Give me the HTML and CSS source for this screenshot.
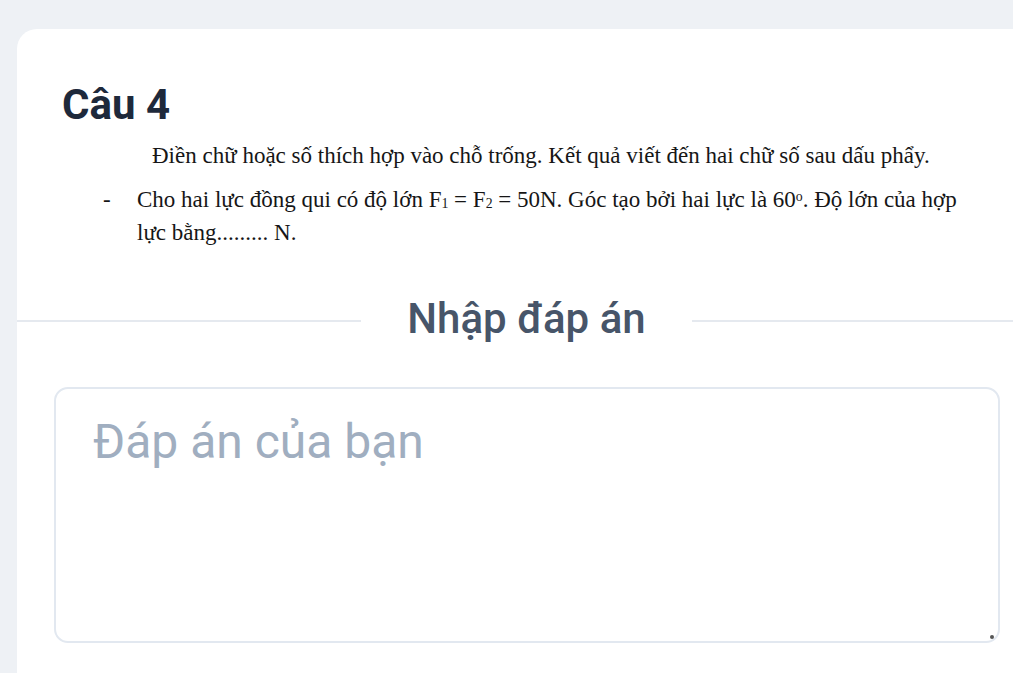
FILE: index.html
```html
<!DOCTYPE html>
<html lang="vi">
<head>
<meta charset="utf-8">
<title>Câu 4</title>
<link rel="stylesheet" href="styles.css">
</head>
<body>
<main class="card">
  <h1 class="title">Câu 4</h1>
  <div class="question">
    <p class="lead">Điền chữ hoặc số thích hợp vào chỗ trống. Kết quả viết đến hai chữ số sau dấu phẩy.</p>
    <div class="item">
      <span class="dash">-</span>
      <p class="item-text">Cho hai lực đồng qui có độ lớn F<sub>1</sub> = F<sub>2</sub> = 50N. Góc tạo bởi hai lực là 60<sup>o</sup>. Độ lớn của hợp lực bằng......... N.</p>
    </div>
  </div>
  <div class="divider">
    <span class="line"></span>
    <h2 class="divider-text">Nhập đáp án</h2>
    <span class="line"></span>
  </div>
  <div class="answer-wrap">
    <textarea class="answer" placeholder="Đáp án của bạn"></textarea>
    <span class="grip"></span>
  </div>
</main>
</body>
</html>
```

FILE: styles.css
```css
html, body {
  margin: 0;
  padding: 0;
}
body {
  background: #eef1f5;
  overflow: hidden;
  font-family: Roboto, "Noto Sans", sans-serif;
}
.card {
  box-sizing: border-box;
  width: 1019px;
  min-height: 660px;
  margin: 29px 0 0 17px;
  background: #ffffff;
  border-radius: 20px 20px 0 0;
  padding: 51px 0 0;
}
.title {
  margin: 0 0 0 45px;
  font-size: 42px;
  line-height: 50px;
  font-weight: 700;
  color: #1e293b;
}
.question {
  font-family: "Liberation Serif", "DejaVu Serif", serif;
  font-size: 23px;
  color: #161616;
  margin-top: 9px;
}
.lead {
  margin: 0 0 0 135px;
  line-height: 33px;
}
.item {
  display: flex;
  margin: 11px 0 0 86px;
}
.dash {
  width: 34px;
  flex: none;
  line-height: 33px;
}
.item-text {
  margin: 0;
  width: 830px;
  line-height: 33px;
}
.item-text sub, .item-text sup {
  font-size: 60%;
  line-height: 0;
}
.item-text sub {
  vertical-align: -1px;
}
.item-text sup {
  vertical-align: 6px;
}
.divider {
  display: flex;
  align-items: center;
  gap: 46px;
  margin-top: 45px;
}
.line {
  flex: 1;
  height: 2px;
  margin-top: 4px;
  background: #e5e9ef;
}
.divider-text {
  margin: 0;
  font-size: 42px;
  line-height: 50px;
  font-weight: 500;
  color: #475569;
}
.answer-wrap {
  position: relative;
  padding: 0 36px 0 37px;
  margin-top: 43px;
}
.answer {
  display: block;
  box-sizing: border-box;
  width: 100%;
  height: 256px;
  border: 2px solid #e2e8f0;
  border-radius: 14px;
  padding: 24px 37px;
  font-family: Roboto, "Noto Sans", sans-serif;
  font-size: 48px;
  color: #1e293b;
  resize: none;
  outline: none;
}
.answer::placeholder {
  color: #a0aec0;
}
.grip {
  position: absolute;
  right: 42px;
  bottom: 4px;
  width: 4px;
  height: 4px;
  border-radius: 50%;
  background: #555;
}
```
